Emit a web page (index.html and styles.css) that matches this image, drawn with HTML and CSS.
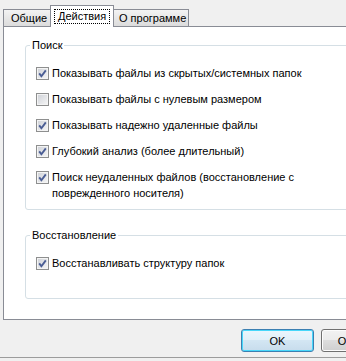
FILE: index.html
```html
<!DOCTYPE html>
<html>
<head>
<meta charset="utf-8">
<link rel="stylesheet" href="styles.css">
</head>
<body>
<div class="window">
  <div class="tabs">
    <div class="tab">Общие</div>
    <div class="tab active"><span class="focus">Действия</span></div>
    <div class="tab">О программе</div>
  </div>
  <div class="panel">
    <fieldset class="group search">
      <legend>Поиск</legend>
      <div class="opt"><span class="cb on"><svg viewBox="0 0 13 13"><path d="M3.2 6.4 L5.4 9.2 L9.8 3.4"/></svg></span><span class="txt">Показывать файлы из скрытых/системных папок</span></div>
      <div class="opt"><span class="cb"></span><span class="txt">Показывать файлы с нулевым размером</span></div>
      <div class="opt"><span class="cb on"><svg viewBox="0 0 13 13"><path d="M3.2 6.4 L5.4 9.2 L9.8 3.4"/></svg></span><span class="txt">Показывать надежно удаленные файлы</span></div>
      <div class="opt"><span class="cb on"><svg viewBox="0 0 13 13"><path d="M3.2 6.4 L5.4 9.2 L9.8 3.4"/></svg></span><span class="txt">Глубокий анализ (более длительный)</span></div>
      <div class="opt"><span class="cb on"><svg viewBox="0 0 13 13"><path d="M3.2 6.4 L5.4 9.2 L9.8 3.4"/></svg></span><span class="txt">Поиск неудаленных файлов (восстановление с поврежденного носителя)</span></div>
    </fieldset>
    <fieldset class="group restore">
      <legend>Восстановление</legend>
      <div class="opt"><span class="cb on"><svg viewBox="0 0 13 13"><path d="M3.2 6.4 L5.4 9.2 L9.8 3.4"/></svg></span><span class="txt">Восстанавливать структуру папок</span></div>
    </fieldset>
  </div>
  <div class="buttons">
    <button class="btn default">OK</button>
    <button class="btn">Отмена</button>
  </div>
  <div class="bottom-line"></div>
</div>
</body>
</html>
```

FILE: styles.css
```css
html, body {
  margin: 0;
  padding: 0;
  background: #f0f0f0;
  overflow: hidden;
}
body {
  width: 346px;
  height: 361px;
  font-family: "Liberation Sans", Arial, sans-serif;
  font-size: 11px;
  color: #000;
}
.window {
  width: 410px;
  padding-top: 5px;
}
.tabs {
  display: flex;
  align-items: flex-end;
  padding-left: 3px;
  height: 21px;
  position: relative;
  z-index: 2;
}
.tab {
  box-sizing: border-box;
  height: 17px;
  border: 1px solid #898c95;
  border-bottom: none;
  background: linear-gradient(#f3f3f3, #e6e6e6 55%, #dcdcdc);
  line-height: 16px;
  padding: 0 5px 0 7px;
  white-space: nowrap;
}
.tab:first-child { width: 48px; }
.tab + .tab { margin-left: -1px; }
.tab.active {
  height: 22px;
  margin-bottom: -1px;
  width: 64px;
  background: #fff;
  padding: 3px 3px 0 3px;
  position: relative;
  z-index: 3;
  line-height: 13px;
}
.tab.active + .tab { margin-left: -1px; width: 76px; padding-left: 5px; }
.focus {
  display: block;
  border: 1px dotted #000;
  padding: 0 2px 0 3px;
  line-height: 13px;
}
.panel {
  margin-left: 3px;
  box-sizing: border-box;
  height: 294px;
  border: 1px solid #898c95;
  background: #fff;
  padding: 12px 0 0 21px;
  position: relative;
  z-index: 1;
}
.group {
  margin: 0;
  border: 1px solid #d5dfe5;
  border-radius: 3px;
  padding: 13px 0 8px 10px;
  min-width: 0;
}
.group legend {
  padding: 0 2px;
  margin-left: -6px;
  line-height: 13px;
}
.restore {
  margin-top: 19px;
  padding-bottom: 27px;
}
.opt {
  display: flex;
  align-items: flex-start;
  line-height: 16px;
  width: 280px;
}
.opt + .opt { margin-top: 10px; }
.cb {
  flex: none;
  box-sizing: border-box;
  width: 13px;
  height: 13px;
  margin-top: 2px;
  margin-right: 3px;
  border: 1px solid #8e8f8f;
  background: linear-gradient(135deg, #cdd0d6, #f7f7f7);
  box-shadow: inset 0 0 0 1px #f4f4f4;
  position: relative;
}
.cb svg {
  position: absolute;
  left: -1px;
  top: -1px;
  width: 13px;
  height: 13px;
  fill: none;
  stroke: #4a5d94;
  stroke-width: 1.9;
}
.buttons {
  display: flex;
  gap: 7px;
  padding: 9px 0 0 241px;
  height: 23px;
}
.btn {
  box-sizing: border-box;
  width: 73px;
  height: 23px;
  margin: 0;
  padding: 0;
  font-family: "Liberation Sans", Arial, sans-serif;
  font-size: 11px;
  color: #000;
  border: 1px solid #707070;
  border-radius: 3px;
  background: linear-gradient(#f2f2f2, #ebebeb 50%, #dddddd 50%, #cfcfcf);
  box-shadow: inset 0 0 0 1px #fcfcfc;
}
.btn.default {
  border-color: #3c7fb1;
  box-shadow: inset 0 0 0 1px #48d7fa;
  background: linear-gradient(#eaf6fd, #e1eff8 50%, #d3e6f3 50%, #c7dcec);
}
.bottom-line {
  margin-top: 5px;
  height: 1px;
  background: #9c9c9c;
}
```
